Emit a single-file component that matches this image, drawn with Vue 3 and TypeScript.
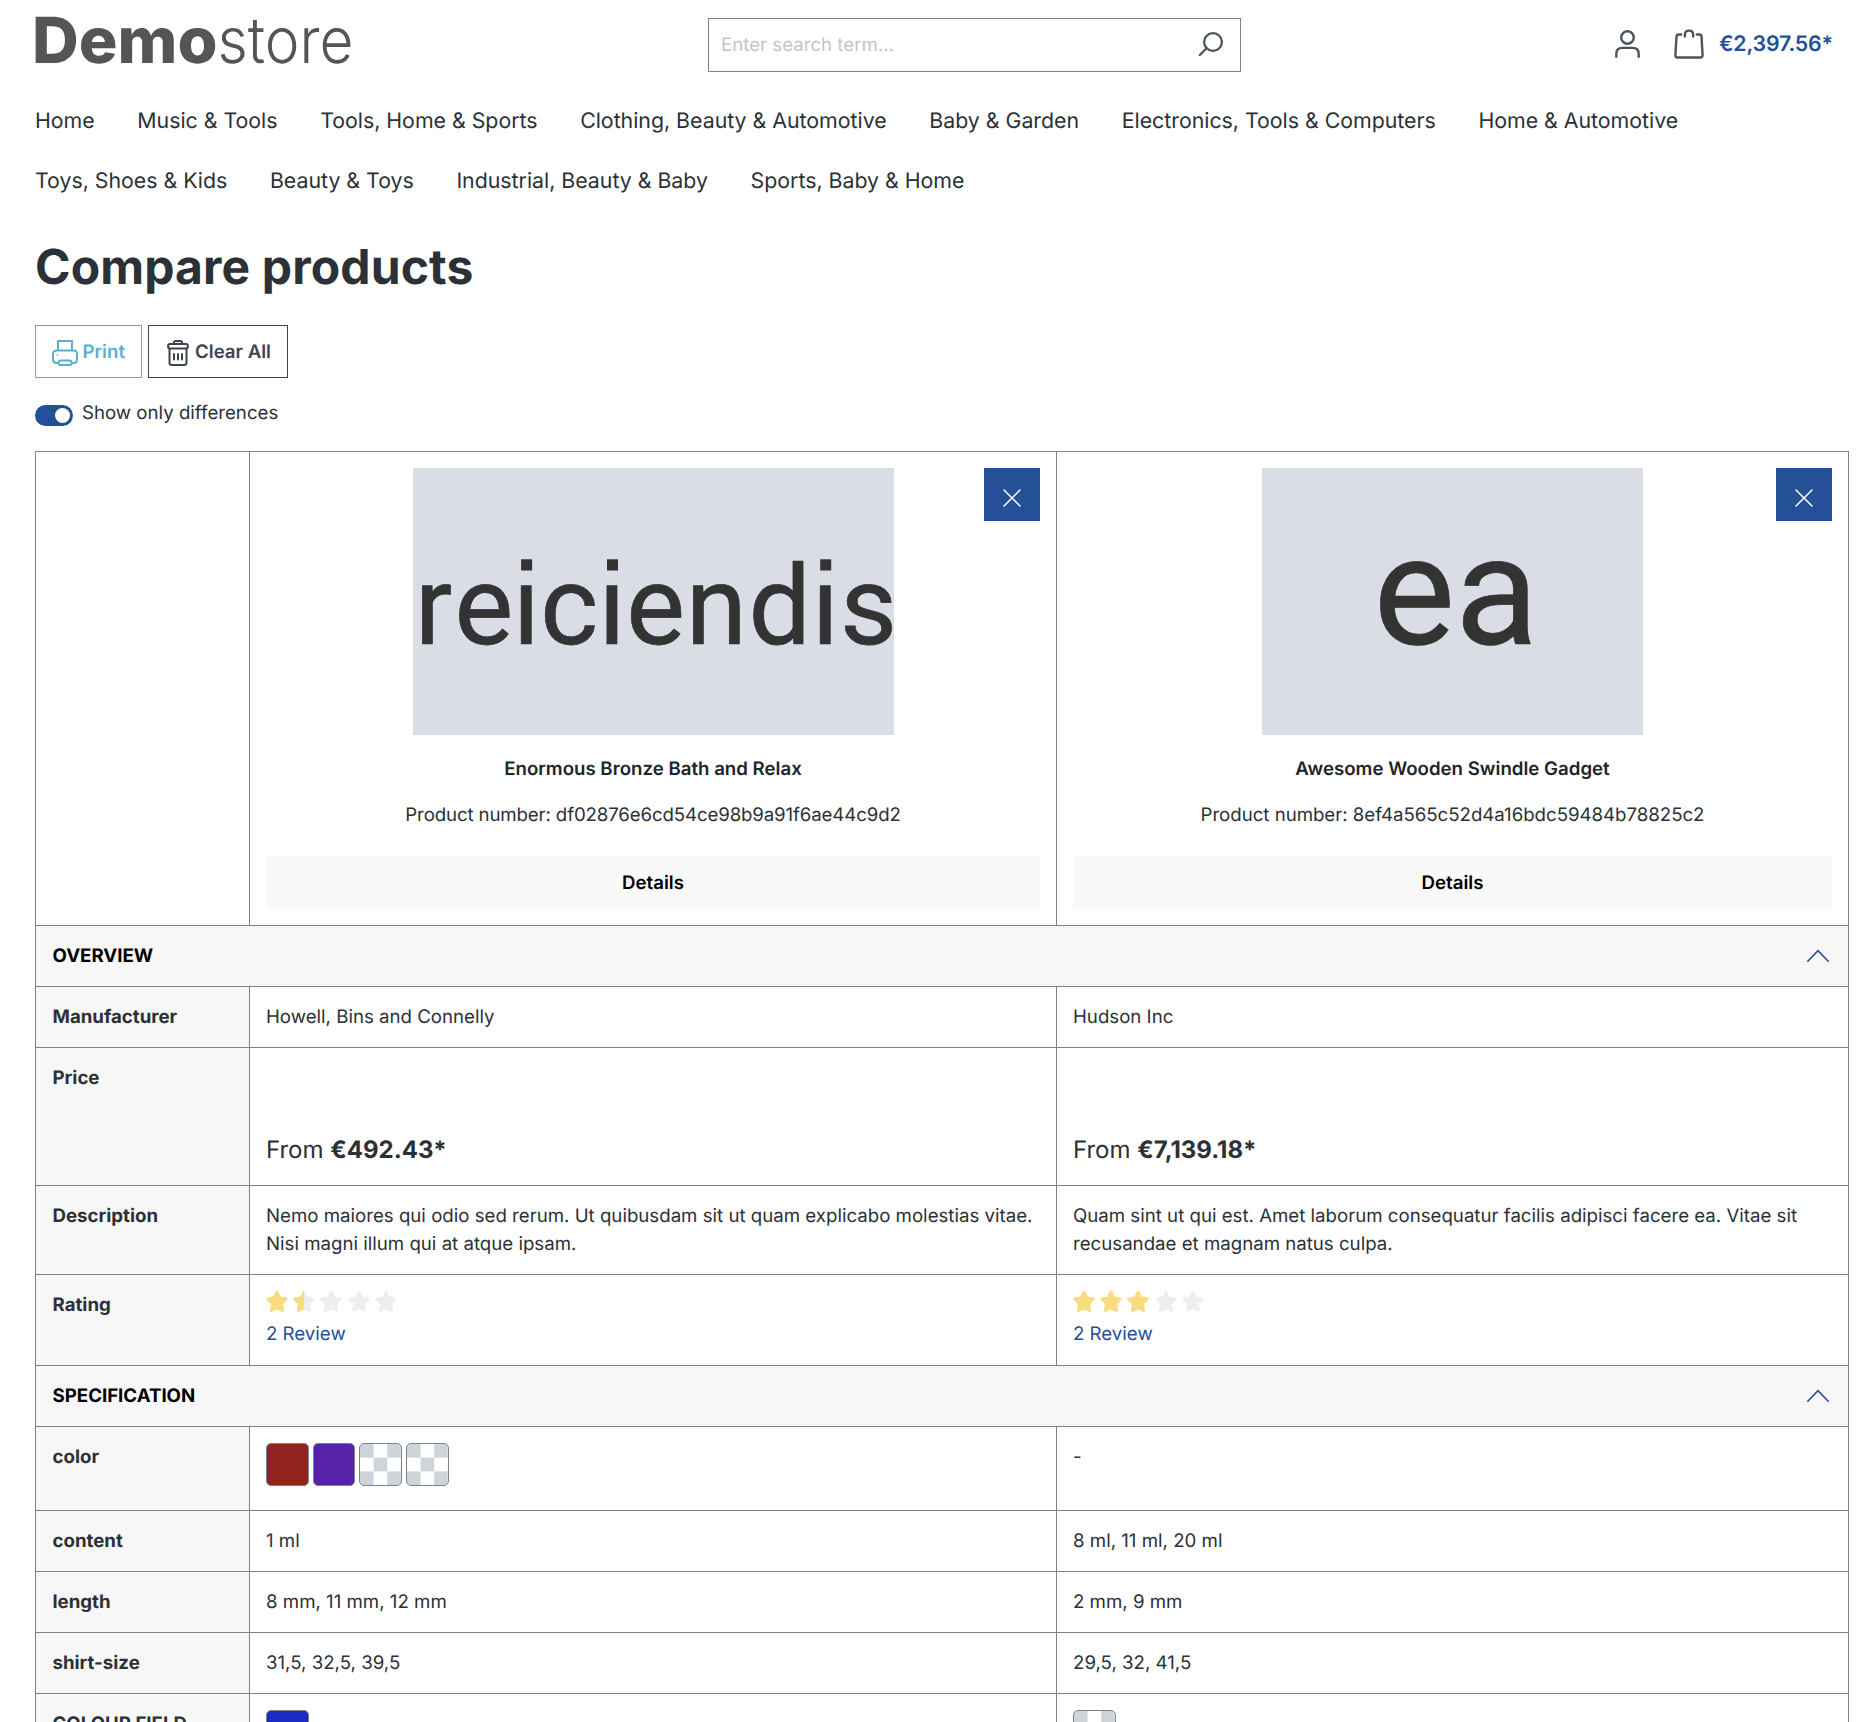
<script setup lang="ts">
import { ref } from 'vue'

interface Product {
  word: string
  imageWidth: number
  textX: string
  dots: number[]
  fontSize: number
  tracking: number
  name: string
  number: string
}

interface Price { kind: 'price'; value: string }
interface Rating { kind: 'rating'; stars: number[]; reviews: number }
interface Swatches { kind: 'swatches'; colors: string[] }
interface Text { kind: 'text'; value: string }
type Cell = Price | Rating | Swatches | Text

interface Row { label: string; height: number; cells: Cell[] }
interface Section { title: string; rows: Row[] }

const text = (value: string): Text => ({ kind: 'text', value })

const navigation: string[] = [
  'Home', 'Music & Tools', 'Tools, Home & Sports', 'Clothing, Beauty & Automotive',
  'Baby & Garden', 'Electronics, Tools & Computers', 'Home & Automotive',
  'Toys, Shoes & Kids', 'Beauty & Toys', 'Industrial, Beauty & Baby', 'Sports, Baby & Home',
]

const products: Product[] = [
  {
    word: 'reiciendis',
    imageWidth: 481,
    textX: '1.8 41.4 99.7 127.2 185.4 213.2 272.8 335.6 398.8 427',
    dots: [108.1, 194, 407.2],
    fontSize: 110.7,
    tracking: -0.13,
    name: 'Enormous Bronze Bath and Relax',
    number: 'df02876e6cd54ce98b9a91f6ae44c9d2',
  },
  {
    word: 'ea',
    imageWidth: 381,
    textX: '111.5',
    dots: [],
    fontSize: 153.5,
    tracking: -0.02,
    name: 'Awesome Wooden Swindle Gadget',
    number: '8ef4a565c52d4a16bdc59484b78825c2',
  },
]

const sections: Section[] = [
  {
    title: 'OVERVIEW',
    rows: [
      { label: 'Manufacturer', height: 61, cells: [text('Howell, Bins and Connelly'), text('Hudson Inc')] },
      { label: 'Price', height: 138, cells: [{ kind: 'price', value: '€492.43*' }, { kind: 'price', value: '€7,139.18*' }] },
      {
        label: 'Description', height: 89, cells: [
          text('Nemo maiores qui odio sed rerum. Ut quibusdam sit ut quam explicabo molestias vitae. Nisi magni illum qui at atque ipsam.'),
          text('Quam sint ut qui est. Amet laborum consequatur facilis adipisci facere ea. Vitae sit recusandae et magnam natus culpa.'),
        ],
      },
      {
        label: 'Rating', height: 91, cells: [
          { kind: 'rating', stars: [1, 0.5, 0, 0, 0], reviews: 2 },
          { kind: 'rating', stars: [1, 1, 1, 0, 0], reviews: 2 },
        ],
      },
    ],
  },
  {
    title: 'SPECIFICATION',
    rows: [
      { label: 'color', height: 84, cells: [{ kind: 'swatches', colors: ['#92221d', '#5522a8', '', ''] }, text('-')] },
      { label: 'content', height: 61, cells: [text('1 ml'), text('8 ml, 11 ml, 20 ml')] },
      { label: 'length', height: 61, cells: [text('8 mm, 11 mm, 12 mm'), text('2 mm, 9 mm')] },
      { label: 'shirt-size', height: 61, cells: [text('31,5, 32,5, 39,5'), text('29,5, 32, 41,5')] },
      { label: 'COLOUR FIELD', height: 84, cells: [{ kind: 'swatches', colors: ['#1c2ac4'] }, { kind: 'swatches', colors: [''] }] },
    ],
  },
]

const starPath = 'M11 1.2 13.8 7 20.2 7.9 15.6 12.5 16.6 19.6 11 16.8 5.4 19.6 6.4 12.5 1.8 7.9 8.2 7Z'
const onlyDifferences = ref(true)
</script>

<template>
  <div class="page">
    <header class="header">
      <svg class="logo" width="317" height="47" viewBox="0 0 317 47">
        <text class="logo-bold" x="-3" y="46.500" textLength="185.500" lengthAdjust="spacingAndGlyphs">Demo</text>
        <text class="logo-light" x="182.500" y="46.500" textLength="136" lengthAdjust="spacingAndGlyphs">store</text>
      </svg>
      <div class="search">
        <input type="text" placeholder="Enter search term..." />
        <svg width="26" height="26" viewBox="0 0 26 26" fill="none" stroke="#4a545b" stroke-width="2.3" stroke-linecap="round">
          <circle cx="15" cy="11" r="8.900" />
          <path d="M8.500 17.200 1.800 24" />
        </svg>
      </div>
      <div class="actions">
        <svg class="user" width="26" height="30" viewBox="0 0 26 30" fill="none" stroke="#4a545b" stroke-width="2.400" stroke-linecap="round">
          <circle cx="12.500" cy="8.500" r="6.300" />
          <path d="M1.300 27.800V25c0-4 2.400-6.100 6-6.100h10.400c3.600 0 6 2.100 6 6.100v2.800" />
        </svg>
        <svg class="bag" width="30" height="30" viewBox="0 0 30 30" fill="none" stroke="#4a545b" stroke-width="2.400" stroke-linecap="round" stroke-linejoin="round">
          <path d="M7.200 5.500H4.700C3.500 5.500 2.600 6.300 2.500 7.500L1.400 26c-.1 1.600.7 2.500 2.200 2.500h22.800c1.500 0 2.300-.9 2.200-2.500L27.500 7.500c-.1-1.200-1-2-2.200-2h-2.500" />
          <path d="M10.900 7.500V5.500c0-2.300 1.500-3.900 4.100-3.900s4.100 1.600 4.100 3.900v2" />
        </svg>
        <span class="total">€2,397.56*</span>
      </div>
    </header>

    <nav class="nav">
      <a v-for="item in navigation" :key="item">{{ item }}</a>
    </nav>

    <h1>Compare products</h1>

    <div class="buttons">
      <button class="btn print">
        <svg width="26" height="26" viewBox="0 0 26 26" fill="none" stroke="currentColor" stroke-width="2" stroke-linejoin="round">
          <path d="M6 10.500V1h14v9.500M6.500 23H4.500C2.300 23 1 21.700 1 19.500V14c0-2.200 1.300-3.500 3.500-3.500h17c2.200 0 3.500 1.300 3.500 3.500v5.500c0 2.200-1.300 3.500-3.500 3.500h-2" />
          <rect x="6.500" y="20.500" width="13" height="4.500" rx="2" />
          <circle cx="5.500" cy="15" r=".5" stroke-width="1" />
        </svg>
        Print
      </button>
      <button class="btn clear">
        <svg width="22" height="26" viewBox="0 0 22 26" fill="none" stroke="currentColor" stroke-width="2" stroke-linejoin="round" stroke-linecap="round">
          <path d="M7 3.800V2.500C7 1.500 7.500 1 8.500 1h5c1 0 1.500.5 1.500 1.500v1.300" />
          <rect x="1.100" y="4" width="19.800" height="4.600" rx="2" />
          <path d="M2.500 8.800V22.500C2.500 24.200 3.300 25 5 25h12c1.700 0 2.500-.8 2.500-2.500V8.800M7 14v5.500M11 14v5.500M15 14v5.500" />
        </svg>
        Clear All
      </button>
    </div>

    <label class="switch" @click="onlyDifferences = !onlyDifferences">
      <span class="track" :class="{ on: onlyDifferences }"><i /></span>
      <span>Show only differences</span>
    </label>

    <div class="table">
      <div class="row head">
        <div class="cell" />
        <div v-for="product in products" :key="product.number" class="cell product">
          <button class="remove">
            <svg width="18" height="18" viewBox="0 0 18 18" stroke="#fff" stroke-width="1.500" stroke-linecap="round">
              <path d="M1 1 17 17M17 1 1 17" />
            </svg>
          </button>
          <svg class="picture" :width="product.imageWidth" height="267">
            <rect width="100%" height="100%" fill="#dadde6" />
            <text :x="product.textX" y="175.500" :font-size="product.fontSize">{{ product.word }}</text>
            <g v-for="x in product.dots" :key="x">
              <rect :x="x - 4" y="88" width="19" height="28" fill="#dadde6" />
              <rect :x="x" y="91.300" width="11" height="11.200" fill="#333" />
            </g>
          </svg>
          <div class="name">{{ product.name }}</div>
          <div class="number" :style="{ letterSpacing: product.tracking + 'px' }">Product number: {{ product.number }}</div>
          <button class="details">Details</button>
        </div>
      </div>

      <template v-for="section in sections" :key="section.title">
        <div class="section">
          <span>{{ section.title }}</span>
          <svg width="24" height="14" viewBox="0 0 24 14" fill="none" stroke="#245097" stroke-width="1.600" stroke-linecap="round">
            <path d="M1.800 12.200 12 1.700 22.200 12.200" />
          </svg>
        </div>
        <div v-for="row in section.rows" :key="row.label" class="row" :style="{ height: row.height + 'px' }">
          <div class="cell label">{{ row.label }}</div>
          <div v-for="(cell, i) in row.cells" :key="i" class="cell" :class="cell.kind">
            <template v-if="cell.kind === 'text'">{{ cell.value }}</template>
            <template v-else-if="cell.kind === 'price'">From <b>{{ cell.value }}</b></template>
            <template v-else-if="cell.kind === 'rating'">
              <div class="stars">
                <span v-for="(fill, s) in cell.stars" :key="s" class="star">
                  <svg width="22" height="21" viewBox="0 0 22 21" fill="#eee" stroke="#eee">
                    <path :d="starPath" stroke-width="2.800" stroke-linejoin="round" />
                  </svg>
                  <span v-if="fill" class="star-fill" :style="{ width: fill * 100 + '%' }">
                    <svg width="22" height="21" viewBox="0 0 22 21" fill="#f8dc7e" stroke="#f8dc7e">
                      <path :d="starPath" stroke-width="2.800" stroke-linejoin="round" />
                    </svg>
                  </span>
                </span>
              </div>
              <a class="reviews">{{ cell.reviews }} Review</a>
            </template>
            <template v-else>
              <span
                v-for="(color, c) in cell.colors"
                :key="c"
                class="swatch"
                :class="{ transparent: !color }"
                :style="color ? { backgroundColor: color } : undefined"
              />
            </template>
          </div>
        </div>
      </template>
    </div>
  </div>
</template>

<style>
html,
body {
  margin: 0;
  background: #fff;
}
</style>

<style scoped>
.page {
  box-sizing: border-box;
  width: 1872px;
  height: 1722px;
  padding: 0 23px 0 35px;
  overflow: hidden;
  font: 400 18.667px/28px Inter, sans-serif;
  text-rendering: geometricPrecision;
  color: #2b3136;
}

button,
input {
  box-sizing: border-box;
  font: inherit;
  text-rendering: inherit;
  border: 0;
  padding: 0;
  margin: 0;
}

svg {
  display: block;
  flex: none;
}

.header {
  display: flex;
  align-items: flex-start;
  height: 91px;
}

.logo {
  margin-top: 16px;
  overflow: visible;
  fill: #555;
  font-size: 63.500px;
}

.logo-bold {
  font-weight: 800;
}

.logo-light {
  font-weight: 300;
}

.search {
  box-sizing: border-box;
  display: flex;
  width: 533px;
  height: 54px;
  margin: 18px 0 0 356px;
  padding: 0 16px 0 12px;
  border: 1px solid #798490;
}

.search input {
  flex: 1;
  min-width: 0;
  outline: none;
  background: none;
}

.search input::placeholder {
  color: #c3c5c8;
  opacity: 1;
}

.search svg {
  margin-top: 12px;
}

.actions {
  display: flex;
  margin: 29px 0 0 373.500px;
}

.bag {
  margin-left: 33.500px;
}

.total {
  margin: 1px 0 0 15px;
  font-size: 21.333px;
  font-weight: 600;
  letter-spacing: -0.180px;
  color: #245097;
}

.nav {
  display: flex;
  flex-wrap: wrap;
  column-gap: 42.667px;
  width: 1700px;
  font-size: 21.333px;
  line-height: 60px;
  letter-spacing: -0.015px;
}

h1 {
  margin: 28px 0 0;
  font-size: 48px;
  line-height: 56px;
  font-weight: 700;
  letter-spacing: 0.140px;
}

.buttons {
  display: flex;
  gap: 6px;
  margin-top: 30px;
}

.btn {
  display: flex;
  align-items: center;
  height: 53px;
  border: 1px solid;
  background: #fff;
  font-weight: 600;
  white-space: nowrap;
}

.btn svg {
  margin-top: 3px;
}

.print {
  width: 107px;
  padding-left: 16px;
  gap: 4.500px;
  color: #58b1ce;
}

.clear {
  width: 140px;
  padding-left: 17.500px;
  gap: 6.500px;
  color: #3d444d;
}

.switch {
  display: flex;
  width: 300px;
  height: 28px;
  margin: 21px 0 24px;
  gap: 9px;
}

.track {
  box-sizing: border-box;
  display: flex;
  width: 38px;
  height: 21px;
  margin-top: 6px;
  padding: 3px;
  border-radius: 11px;
  background: #798490;
}

.track.on {
  justify-content: flex-end;
  background: #245097;
}

.track i {
  width: 15px;
  height: 15px;
  border-radius: 50%;
  background: #fff;
}

.table {
  border: solid #798490;
  border-width: 1px 0 0 1px;
}

.row {
  display: grid;
  grid-template-columns: 214px 807px 792px;
}

.row.head {
  height: 474px;
}

.cell {
  box-sizing: border-box;
  padding: 16px;
  border: solid #798490;
  border-width: 0 1px 1px 0;
}

.label {
  padding-left: 16.500px;
  background: #f7f7f7;
  font-weight: 700;
}

.section {
  box-sizing: border-box;
  display: flex;
  align-items: center;
  justify-content: space-between;
  height: 61px;
  padding: 0 18px 0 16.500px;
  border: solid #798490;
  border-width: 0 1px 1px 0;
  background: #f7f7f7;
  color: #000;
  font-weight: 700;
}

.product {
  position: relative;
  display: flex;
  flex-direction: column;
  align-items: center;
}

.remove {
  position: absolute;
  top: 16px;
  right: 16px;
  display: flex;
  align-items: center;
  justify-content: center;
  width: 56px;
  height: 53px;
  padding-top: 7px;
  background: #245097;
}

.picture text {
  font-family: Roboto, sans-serif;
  fill: #333;
  stroke: #333;
  stroke-width: 0.700px;
}

.name {
  margin-top: 20px;
  font-weight: 600;
  color: #212529;
}

.number {
  margin-top: 18px;
}

.details {
  width: 100%;
  height: 53px;
  margin-top: 27px;
  background: #f9f9f9;
  color: #000;
  font-weight: 600;
}

.price {
  padding-top: 88px;
  font-size: 24px;
}

.rating {
  padding-top: 16px;
}

.stars {
  display: flex;
  gap: 5.200px;
}

.star {
  position: relative;
}

.star-fill {
  position: absolute;
  inset: 0;
  overflow: hidden;
}

.reviews {
  display: block;
  margin-top: 8px;
  color: #245097;
}

.swatches {
  display: flex;
  gap: 4px;
}

.swatch {
  box-sizing: border-box;
  width: 42.667px;
  height: 43px;
  border: 1px solid #798490;
  border-radius: 5px;
}

.transparent {
  background: repeating-conic-gradient(#fff 0 25%, #cdd4da 0 50%) 0 0 / 27.200px 27.400px;
}
</style>
